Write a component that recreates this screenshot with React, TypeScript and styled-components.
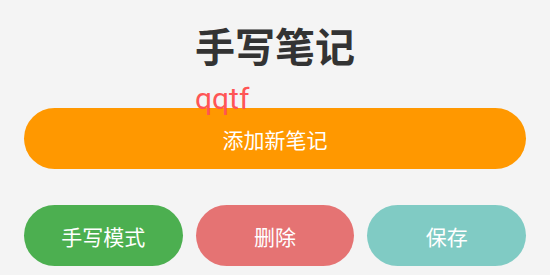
import React from "react";
import styled, { createGlobalStyle } from "styled-components";

const Global = createGlobalStyle`
  html, body { margin: 0; padding: 0; background: #f4f4f4; }
  body { font-family: "Noto Sans", "Noto Sans CJK SC", sans-serif; }
`;

const Page = styled.div`
  width: 550px;
  height: 275px;
  box-sizing: border-box;
  padding: 20px 24px 0;
  display: flex;
  flex-direction: column;
  background: #f4f4f4;
`;

const Title = styled.h1`
  margin: 0;
  font-family: "Noto Sans CJK SC", sans-serif;
  font-size: 40px;
  font-weight: 700;
  color: #333333;
  text-align: center;
  line-height: 50px;
`;

const NoteArea = styled.div`
  position: relative;
  height: 38px;
`;

const Scribble = styled.span`
  position: absolute;
  left: 171px;
  top: 9px;
  font-family: Roboto, sans-serif;
  font-size: 30px;
  line-height: 40px;
  color: #ff5555;
  z-index: 2;
`;

const Pill = styled.button<{ $bg: string }>`
  border: none;
  border-radius: 31px;
  background: ${(p) => p.$bg};
  color: #ffffff;
  font-family: "Noto Sans CJK SC", sans-serif;
  font-size: 21px;
  height: 61px;
  padding: 0;
  display: flex;
  align-items: center;
  justify-content: center;
`;

const Row = styled.div`
  display: grid;
  grid-template-columns: repeat(3, 1fr);
  gap: 13px;
  margin-top: 36px;
`;

export default function App() {
  return (
    <>
      <Global />
      <Page>
        <Title>手写笔记</Title>
        <NoteArea>
          <Scribble>qqtf</Scribble>
        </NoteArea>
        <Pill $bg="#ff9800">添加新笔记</Pill>
        <Row>
          <Pill $bg="#4caf50">手写模式</Pill>
          <Pill $bg="#e57373">删除</Pill>
          <Pill $bg="#80cbc4">保存</Pill>
        </Row>
      </Page>
    </>
  );
}
